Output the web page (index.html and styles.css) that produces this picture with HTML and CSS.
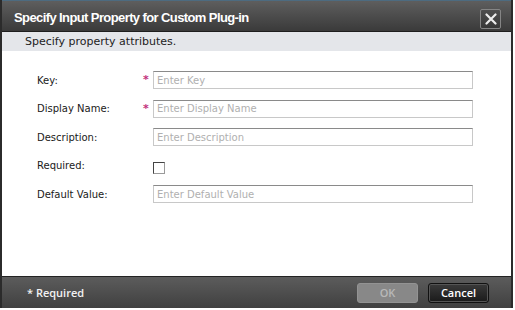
FILE: index.html
```html
<!DOCTYPE html>
<html>
<head>
<meta charset="utf-8">
<link rel="stylesheet" href="styles.css">
</head>
<body>
<div class="dialog">
  <div class="titlebar">
    <span class="title">Specify Input Property for Custom Plug-in</span>
    <button class="close" aria-label="Close">
      <svg width="12" height="12" viewBox="0 0 12 12"><path d="M1.5 1.5 L10.5 10.5 M10.5 1.5 L1.5 10.5" stroke="#ececec" stroke-width="2.2" stroke-linecap="round"/></svg>
    </button>
  </div>
  <div class="subheader">Specify property attributes.</div>
  <div class="content">
    <form class="form">
      <label class="label">Key:</label>
      <span class="req">*</span>
      <input class="field" type="text" placeholder="Enter Key">

      <label class="label">Display Name:</label>
      <span class="req">*</span>
      <input class="field" type="text" placeholder="Enter Display Name">

      <label class="label">Description:</label>
      <span class="req"></span>
      <input class="field" type="text" placeholder="Enter Description">

      <label class="label">Required:</label>
      <span class="req"></span>
      <span class="check-cell"><span class="checkbox"></span></span>

      <label class="label">Default Value:</label>
      <span class="req"></span>
      <input class="field" type="text" placeholder="Enter Default Value">
    </form>
  </div>
  <div class="footer">
    <span class="note">* Required</span>
    <div class="buttons">
      <button class="btn btn-ok" disabled>OK</button>
      <button class="btn btn-cancel">Cancel</button>
    </div>
  </div>
</div>
</body>
</html>
```

FILE: styles.css
```css
html, body {
  margin: 0;
  padding: 0;
  background: #ffffff;
}

.dialog {
  width: 509px;
  height: 308px;
  display: flex;
  flex-direction: column;
  border-left: 2px solid #2b2b2b;
  border-right: 2px solid #2b2b2b;
  font-family: "DejaVu Sans", Verdana, sans-serif;
}

.titlebar {
  height: 31px;
  flex: none;
  box-sizing: border-box;
  border-top: 1px solid #4d6b80;
  background: linear-gradient(#5e5e5e, #3a3a3a);
  display: flex;
  align-items: center;
  justify-content: space-between;
  padding: 0 10px 0 12px;
}

.title {
  color: #ffffff;
  font-family: "Liberation Sans", Arial, sans-serif;
  font-weight: bold;
  font-size: 13px;
  letter-spacing: -0.6px;
  margin-top: 2px;
}

.close {
  width: 21px;
  height: 20px;
  margin-top: 6px;
  padding: 0;
  border: 1px solid #858585;
  border-radius: 2px;
  background: linear-gradient(#4e4e4e, #383838);
  display: flex;
  align-items: center;
  justify-content: center;
}

.subheader {
  height: 20px;
  flex: none;
  box-sizing: border-box;
  border-top: 1px solid #1e1e1e;
  background: #e4e6ea;
  color: #222;
  font-size: 11px;
  padding-left: 23px;
  display: flex;
  align-items: center;
}

.content {
  flex: 1;
  background: #ffffff;
  padding: 20px 0 0 35px;
}

.form {
  display: grid;
  grid-template-columns: 106px 10px 320px;
  grid-auto-rows: 18px;
  row-gap: 10.5px;
  align-items: center;
  margin: 0;
}

.label {
  font-size: 10px;
  color: #1a1a1a;
}

.req {
  color: #c2307c;
  font-size: 11px;
  font-weight: bold;
  line-height: 18px;
}

.field {
  box-sizing: border-box;
  width: 320px;
  height: 18px;
  margin: 0;
  padding: 0 4px 0 3px;
  border: 1px solid #c8c8c8;
  border-top-color: #8a8a8a;
  font-family: "DejaVu Sans", Verdana, sans-serif;
  font-size: 10px;
  color: #222;
  outline: none;
}

.field::placeholder {
  color: #b0b0b0;
}

.check-cell {
  display: flex;
  align-items: center;
  padding-top: 4px;
}

.checkbox {
  width: 12px;
  height: 12px;
  box-sizing: border-box;
  border: 1px solid #9a9a9a;
  border-top-color: #444;
  border-left-color: #444;
  background: #fff;
}

.footer {
  height: 32px;
  flex: none;
  box-sizing: border-box;
  border-top: 1px solid #222;
  background: linear-gradient(#5c5c5c, #404040);
  display: flex;
  align-items: center;
  justify-content: space-between;
  padding: 0 22px 0 25px;
}

.note {
  color: #f2f2f2;
  font-family: "Open Sans", "DejaVu Sans", sans-serif;
  font-size: 11px;
  font-weight: 600;
}

.buttons {
  display: flex;
  gap: 10px;
}

.btn {
  width: 61px;
  height: 20px;
  box-sizing: border-box;
  border-radius: 3px;
  font-family: "Open Sans", "DejaVu Sans", sans-serif;
  font-size: 11px;
  font-weight: 600;
  padding: 0;
}

.btn-ok {
  background: #888888;
  border: 1px solid #939393;
  color: #b8b8b8;
}

.btn-cancel {
  background: linear-gradient(#3a3a3a, #1a1a1a);
  border: 1px solid #111;
  box-shadow: inset 0 0 0 1px #555;
  color: #ffffff;
}
```
